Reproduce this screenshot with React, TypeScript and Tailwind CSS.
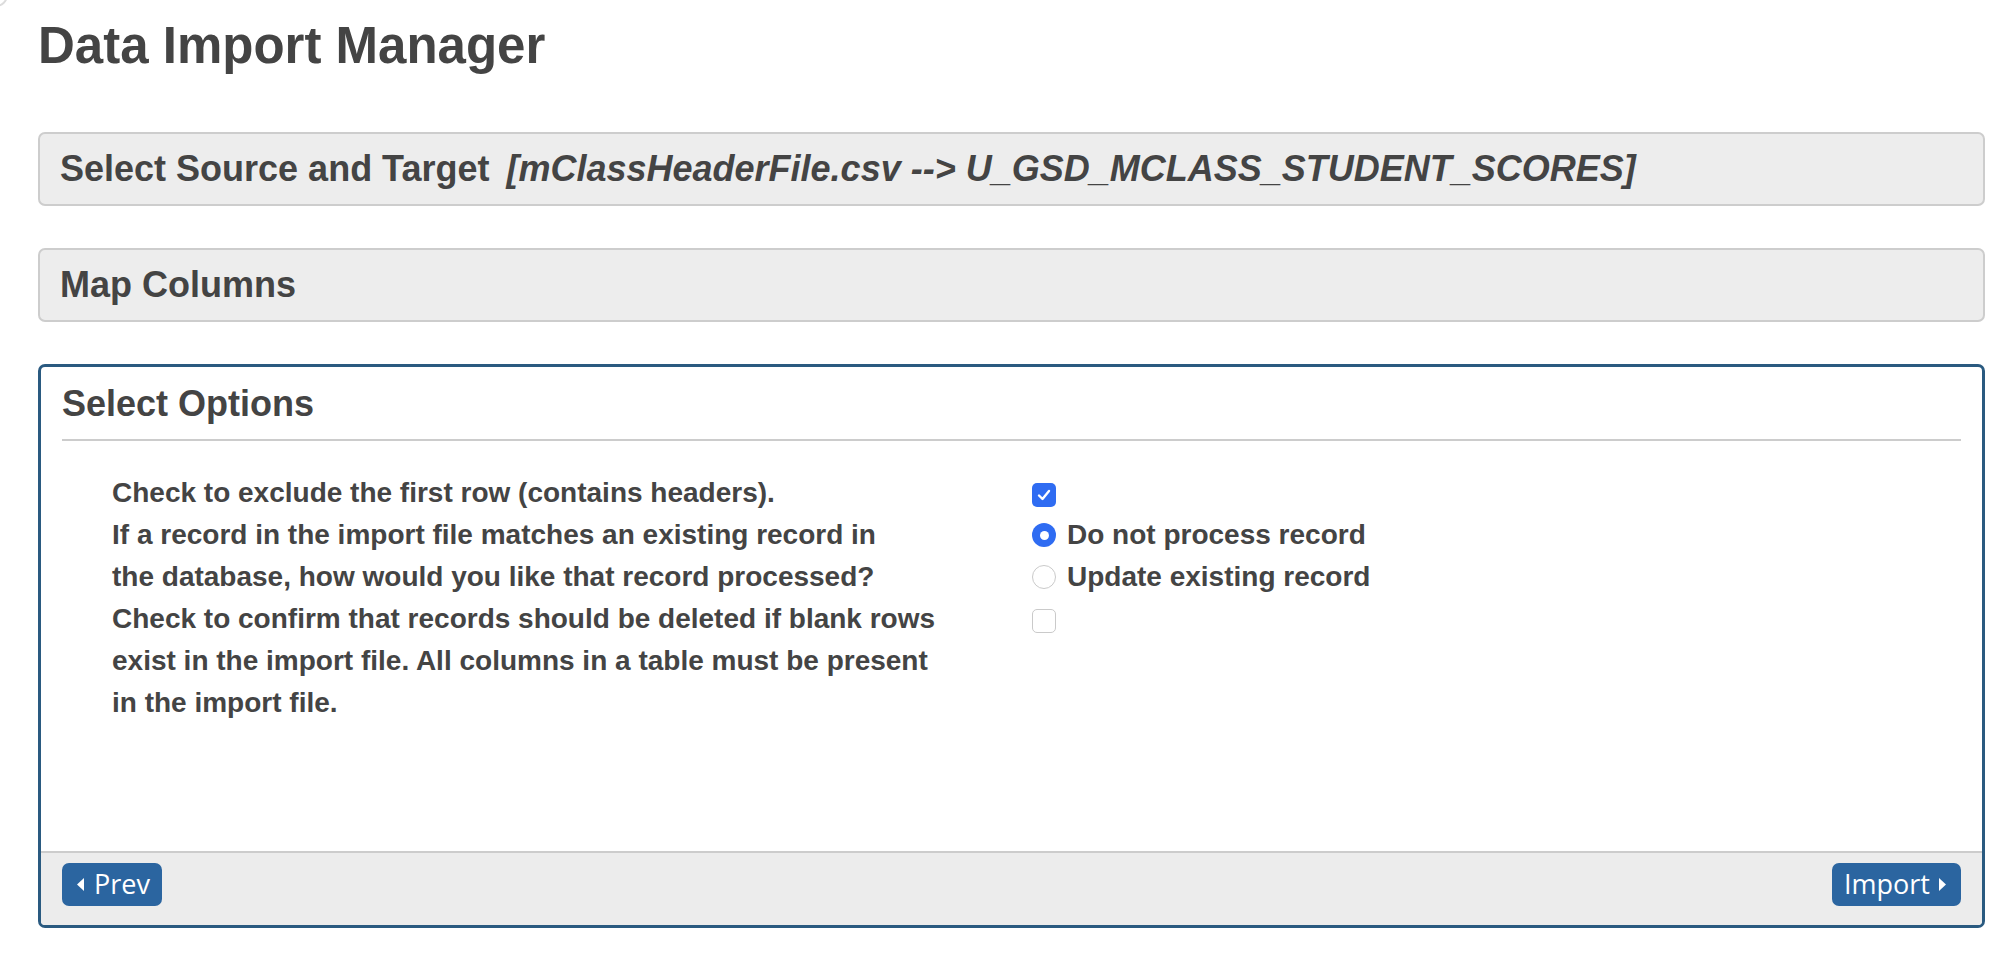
import React from "react";

function Caret({ dir }: { dir: "left" | "right" }) {
  return (
    <svg width="7" height="13" viewBox="0 0 7 13" className="shrink-0">
      {dir === "left" ? (
        <polygon points="7,0 7,13 0,6.5" fill="#ffffff" />
      ) : (
        <polygon points="0,0 0,13 7,6.5" fill="#ffffff" />
      )}
    </svg>
  );
}

function Checkbox({ checked }: { checked?: boolean }) {
  if (checked) {
    return (
      <span className="mt-[4px] flex h-[24px] w-[24px] items-center justify-center rounded-[5px] bg-[#2f6cf2]">
        <svg width="16" height="16" viewBox="0 0 16 16">
          <path d="M3 8.5 L6.5 12 L13 4" fill="none" stroke="#fff" strokeWidth="2.4" strokeLinecap="round" strokeLinejoin="round" />
        </svg>
      </span>
    );
  }
  return <span className="mt-[4px] block h-[24px] w-[24px] rounded-[5px] border-[1.5px] border-[#cacaca] bg-white" />;
}

function Radio({ checked }: { checked?: boolean }) {
  if (checked) {
    return (
      <span className="flex h-[24px] w-[24px] items-center justify-center rounded-full bg-[#2f6cf2]">
        <span className="h-[9px] w-[9px] rounded-full bg-white" />
      </span>
    );
  }
  return <span className="block h-[24px] w-[24px] rounded-full border-[1.5px] border-[#cacaca] bg-white" />;
}

function CollapsedPanel({ children }: { children: React.ReactNode }) {
  return (
    <div className="flex h-[74px] items-center rounded-[7px] border-2 border-[#cdcdcd] bg-[#ededed] px-[20px] text-[36px] font-bold leading-[42px]">
      {children}
    </div>
  );
}

function NavButton({ label, dir }: { label: string; dir: "left" | "right" }) {
  return (
    <button
      className={
        dir === "left"
          ? "flex h-[43px] items-center gap-[10px] rounded-[7px] bg-[#2b65a0] pl-[15px] pr-[12px] font-['Open_Sans',Arial,sans-serif] text-[27px] text-white"
          : "flex h-[43px] items-center gap-[9px] rounded-[7px] bg-[#2b65a0] pl-[12px] pr-[15px] font-['Open_Sans',Arial,sans-serif] text-[27px] text-white"
      }
    >
      {dir === "left" && <Caret dir="left" />}
      <span>{label}</span>
      {dir === "right" && <Caret dir="right" />}
    </button>
  );
}

export default function App() {
  return (
    <div className="relative min-h-screen overflow-hidden bg-white pb-[50px] pl-[38px] pr-[29px] font-['Liberation_Sans',Arial,sans-serif] text-[#444]">
      <span className="absolute -left-[16px] -top-[17px] h-[24px] w-[24px] rounded-full border-2 border-[#dcdcdc]" />

      <h1 className="pt-[18px] text-[51px] font-bold leading-[55px]">Data Import Manager</h1>

      <div className="mt-[59px] flex flex-col gap-[42px]">
        <CollapsedPanel>
          <span>Select Source and Target</span>
          <span className="ml-[17px] italic">[mClassHeaderFile.csv --&gt; U_GSD_MCLASS_STUDENT_SCORES]</span>
        </CollapsedPanel>

        <CollapsedPanel>
          <span>Map Columns</span>
        </CollapsedPanel>

        <div className="overflow-hidden rounded-[7px] border-[3px] border-[#2a5a80]">
          <div className="px-[21px] pt-[16px]">
            <h2 className="text-[36px] font-bold leading-[42px]">Select Options</h2>
            <div className="mt-[14px] h-[2px] bg-[#cccccc]" />
          </div>

          <div className="h-[410px] px-[71px] pt-[31px]">
            <div className="grid grid-cols-[920px_1fr] text-[28px] font-bold leading-[42px]">
              <div>Check to exclude the first row (contains headers).</div>
              <div className="flex h-[42px] items-center">
                <Checkbox checked />
              </div>

              <div>
                If a record in the import file matches an existing record in
                <br />
                the database, how would you like that record processed?
              </div>
              <div className="flex flex-col">
                <label className="flex h-[42px] items-center gap-[11px]">
                  <Radio checked />
                  <span>Do not process record</span>
                </label>
                <label className="flex h-[42px] items-center gap-[11px]">
                  <Radio />
                  <span>Update existing record</span>
                </label>
              </div>

              <div>
                Check to confirm that records should be deleted if blank rows
                <br />
                exist in the import file. All columns in a table must be present
                <br />
                in the import file.
              </div>
              <div className="flex h-[42px] items-center">
                <Checkbox />
              </div>
            </div>
          </div>

          <div className="flex items-start justify-between border-t-2 border-[#cccccc] bg-[#ececec] px-[21px] pb-[19px] pt-[10px]">
            <NavButton label="Prev" dir="left" />
            <NavButton label="Import" dir="right" />
          </div>
        </div>
      </div>
    </div>
  );
}
